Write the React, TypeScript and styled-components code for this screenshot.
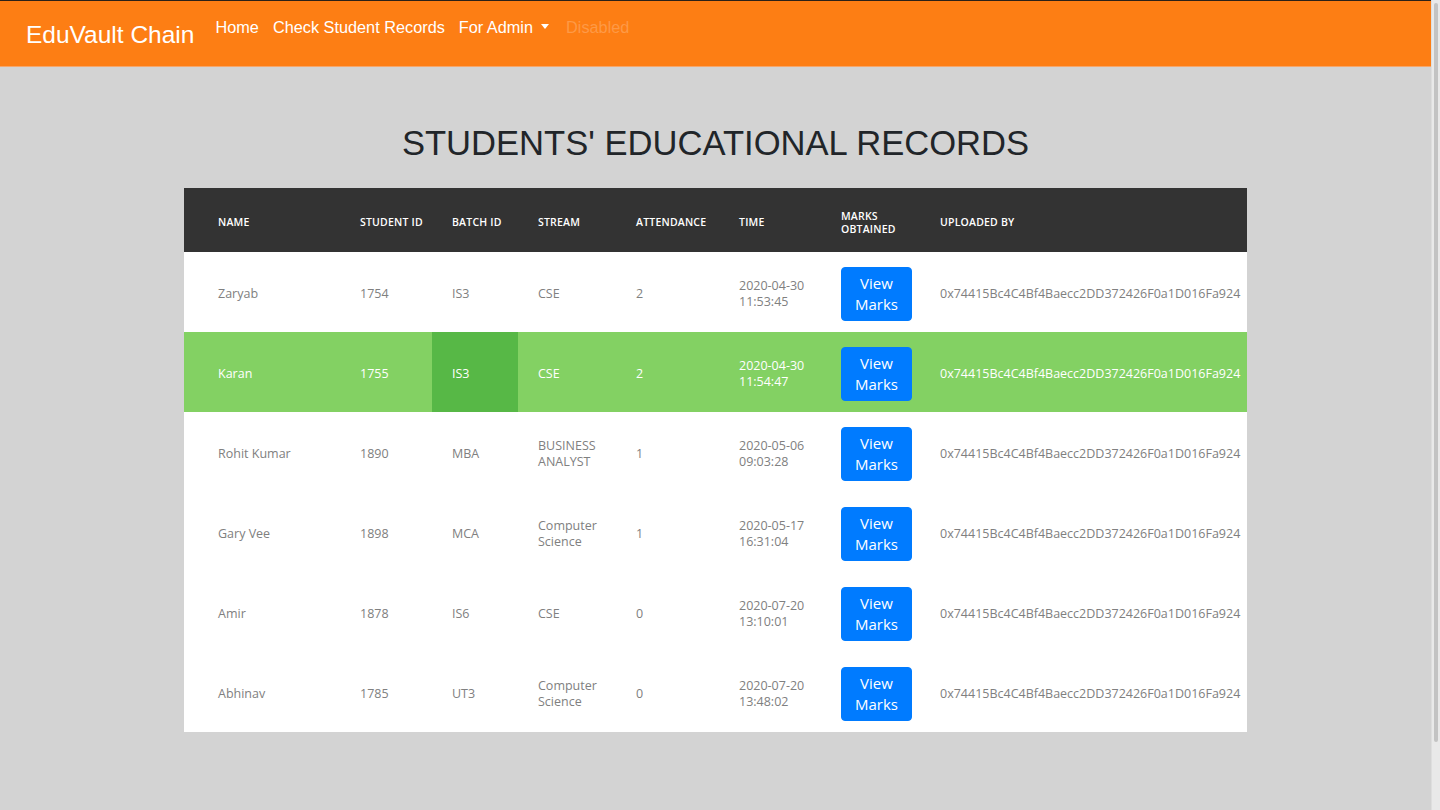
import React from 'react';
import styled, { createGlobalStyle } from 'styled-components';

const GlobalStyle = createGlobalStyle`
  html, body {
    margin: 0;
    padding: 0;
    background: #d3d3d3;
  }
  body {
    font-family: 'Liberation Sans', Arial, sans-serif;
    overflow: hidden;
  }
`;

const Layout = styled.div`
  display: grid;
  grid-template-columns: 1fr 9px;
  min-height: 100vh;
`;

const Page = styled.div`
  min-width: 0;
`;

const ScrollRail = styled.div`
  height: 100vh;
  box-sizing: border-box;
  padding: 3px 2px 0 2px;
  background: #e9e9e9;
  border-left: 1px solid #dedede;
`;

const ScrollThumb = styled.div`
  height: 739px;
  border-radius: 3px;
  background: #c3c3c3;
`;

const Navbar = styled.nav`
  display: flex;
  align-items: flex-start;
  height: 67px;
  box-sizing: border-box;
  border-top: 1px solid #2b2118;
  border-bottom: 1px solid #f6a66a;
  background-color: #fd7e14;
  padding-left: 26px;
`;

const Brand = styled.a`
  margin-top: 16px;
  margin-right: 14px;
  font-size: 24.5px;
  line-height: 36px;
  color: #fff;
  text-decoration: none;
  white-space: nowrap;
`;

const NavLinks = styled.ul`
  display: flex;
  list-style: none;
  margin: 14px 0 0;
  padding: 0;
`;

const NavLink = styled.li<{ $disabled?: boolean; $dropdown?: boolean }>`
  padding: 0 7px;
  margin-left: ${(p) => (p.$disabled ? '3px' : '0')};
  font-size: 16.3px;
  line-height: 24px;
  color: ${(p) => (p.$disabled ? 'rgba(255, 255, 255, 0.22)' : '#fff')};
  white-space: nowrap;

  ${(p) =>
    p.$dropdown &&
    `
    &::after {
      content: '';
      display: inline-block;
      margin-left: 8px;
      vertical-align: 4px;
      border-top: 5px solid;
      border-right: 4.5px solid transparent;
      border-left: 4.5px solid transparent;
    }
  `}
`;

const Main = styled.main`
  display: flex;
  flex-direction: column;
  align-items: center;
  padding: 55px 0 60px;
`;

const Title = styled.h1`
  margin: 0 0 23px;
  font-size: 34.6px;
  font-weight: 400;
  line-height: 43px;
  color: #212529;
`;

const Table = styled.table`
  width: 1063px;
  border-collapse: collapse;
  table-layout: fixed;
  background: #fff;
  font-family: 'Open Sans', 'Liberation Sans', sans-serif;
`;

const HeadRow = styled.tr`
  height: 64px;
  background: #333333;
`;

const HeadCell = styled.th<{ $first?: boolean }>`
  padding: 5px 8px 0 ${(p) => (p.$first ? '34px' : '20px')};
  text-align: left;
  font-size: 10.5px;
  font-weight: 600;
  line-height: 13px;
  letter-spacing: 0.2px;
  color: #fff;
  text-transform: uppercase;
`;

const Row = styled.tr<{ $active?: boolean }>`
  height: 80px;
  background: ${(p) => (p.$active ? '#83d163' : '#fff')};
  color: ${(p) => (p.$active ? '#fff' : '#808080')};
`;

const Cell = styled.td<{ $first?: boolean; $highlight?: boolean }>`
  padding: 4px 8px 0 ${(p) => (p.$first ? '34px' : '20px')};
  vertical-align: middle;
  font-size: 12.5px;
  line-height: 16px;
  background: ${(p) => (p.$highlight ? '#57b846' : 'transparent')};
`;

const Address = styled.span`
  white-space: nowrap;
`;

const MarksButton = styled.button`
  display: block;
  width: 71px;
  height: 54px;
  padding: 0 10px;
  border: 1px solid #007bff;
  border-radius: 4px;
  background: #007bff;
  color: #fff;
  font-family: 'Open Sans', 'Liberation Sans', sans-serif;
  font-size: 15px;
  line-height: 21px;
  cursor: pointer;
`;

const widths = [156, 92, 86, 98, 103, 102, 99, 327];

const headers = [
  'Name',
  'Student ID',
  'Batch ID',
  'Stream',
  'Attendance',
  'Time',
  'Marks Obtained',
  'Uploaded By',
];

const address = '0x74415Bc4C4Bf4Baecc2DD372426F0a1D016Fa924';

const records = [
  { name: 'Zaryab', id: '1754', batch: 'IS3', stream: 'CSE', att: '2', date: '2020-04-30', time: '11:53:45' },
  { name: 'Karan', id: '1755', batch: 'IS3', stream: 'CSE', att: '2', date: '2020-04-30', time: '11:54:47' },
  { name: 'Rohit Kumar', id: '1890', batch: 'MBA', stream: 'BUSINESS ANALYST', att: '1', date: '2020-05-06', time: '09:03:28' },
  { name: 'Gary Vee', id: '1898', batch: 'MCA', stream: 'Computer Science', att: '1', date: '2020-05-17', time: '16:31:04' },
  { name: 'Amir', id: '1878', batch: 'IS6', stream: 'CSE', att: '0', date: '2020-07-20', time: '13:10:01' },
  { name: 'Abhinav', id: '1785', batch: 'UT3', stream: 'Computer Science', att: '0', date: '2020-07-20', time: '13:48:02' },
];

export default function App() {
  return (
    <>
      <GlobalStyle />
      <Layout>
        <Page>
          <Navbar>
            <Brand href="#">EduVault Chain</Brand>
            <NavLinks>
              <NavLink>Home</NavLink>
              <NavLink>Check Student Records</NavLink>
              <NavLink $dropdown>For Admin</NavLink>
              <NavLink $disabled>Disabled</NavLink>
            </NavLinks>
          </Navbar>
          <Main>
            <Title>STUDENTS' EDUCATIONAL RECORDS</Title>
            <Table>
              <colgroup>
                {widths.map((w, i) => (
                  <col key={i} style={{ width: w }} />
                ))}
              </colgroup>
              <thead>
                <HeadRow>
                  {headers.map((h, i) => (
                    <HeadCell key={h} $first={i === 0}>
                      {h}
                    </HeadCell>
                  ))}
                </HeadRow>
              </thead>
              <tbody>
                {records.map((r, i) => {
                  const active = i === 1;
                  return (
                    <Row key={r.id} $active={active}>
                      <Cell $first>{r.name}</Cell>
                      <Cell>{r.id}</Cell>
                      <Cell $highlight={active}>{r.batch}</Cell>
                      <Cell>{r.stream}</Cell>
                      <Cell>{r.att}</Cell>
                      <Cell>
                        {r.date}
                        <br />
                        {r.time}
                      </Cell>
                      <Cell>
                        <MarksButton>View Marks</MarksButton>
                      </Cell>
                      <Cell>
                        <Address>{address}</Address>
                      </Cell>
                    </Row>
                  );
                })}
              </tbody>
            </Table>
          </Main>
        </Page>
        <ScrollRail>
          <ScrollThumb />
        </ScrollRail>
      </Layout>
    </>
  );
}
